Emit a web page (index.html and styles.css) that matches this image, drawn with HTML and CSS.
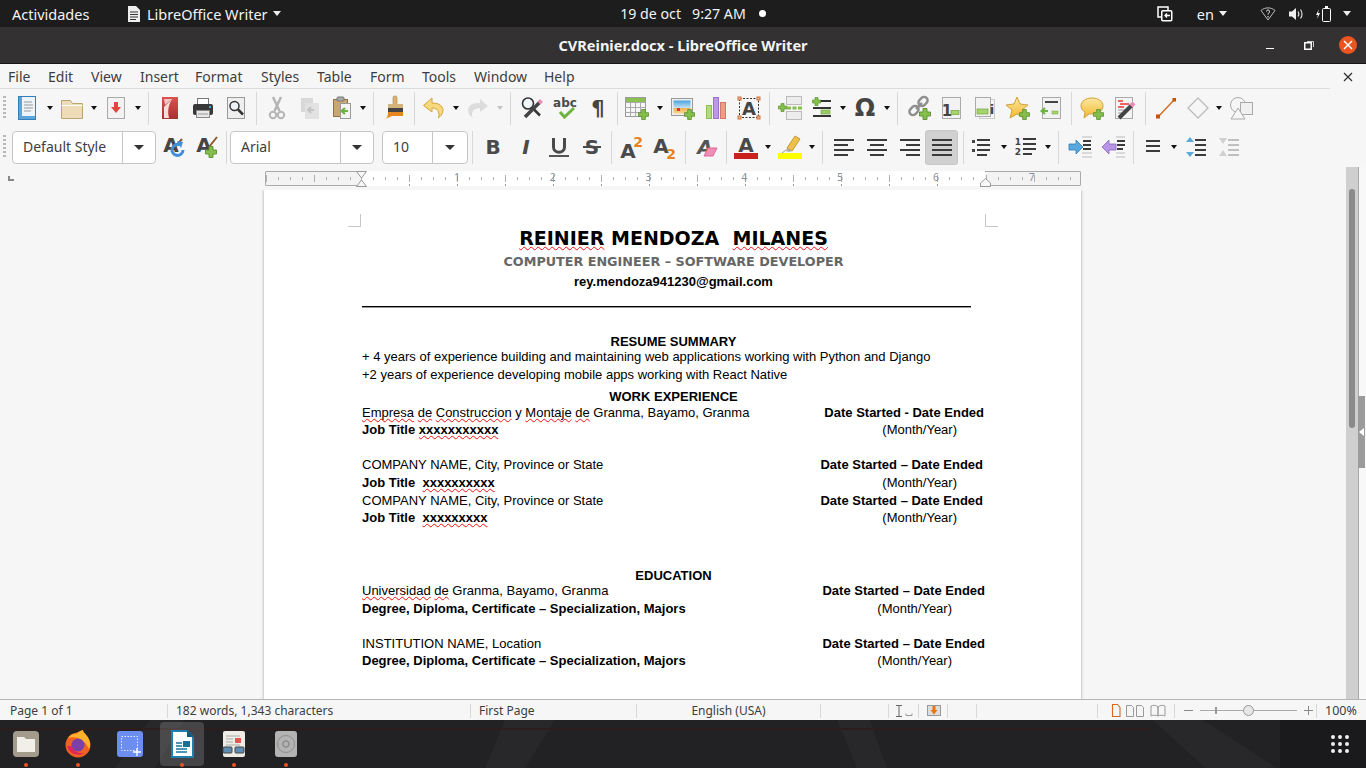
FILE: index.html
```html
<!DOCTYPE html>
<html lang="es">
<head>
<meta charset="utf-8">
<title>CVReinier.docx - LibreOffice Writer</title>
<link rel="stylesheet" href="styles.css">
</head>
<body>
<svg class="defs" width="0" height="0" aria-hidden="true">
  <defs>
    <symbol id="plus" viewBox="0 0 12 12"><path d="M4 .5h4v3.500h3.500v4H8v3.500H4V8H.5V4H4z" fill="#85bf4b" stroke="#5b8f2d" stroke-width=".9"/></symbol>
    <linearGradient id="pdfg" x1="0" y1="0" x2="0" y2="1"><stop offset="0" stop-color="#d9534f"/><stop offset="1" stop-color="#a83232"/></linearGradient>
    <linearGradient id="yel" x1="0" y1="0" x2="0" y2="1"><stop offset="0" stop-color="#fbe9a0"/><stop offset="1" stop-color="#f3b72f"/></linearGradient>
    <linearGradient id="sky" x1="0" y1="0" x2="0" y2="1"><stop offset="0" stop-color="#4aa3df"/><stop offset=".55" stop-color="#bfe0f2"/><stop offset=".56" stop-color="#f0b050"/><stop offset="1" stop-color="#f6d68e"/></linearGradient>
  </defs>
</svg>

<header class="topbar">
  <div class="top-left">
    <span class="activities">Actividades</span>
    <span class="appname">
      <svg width="14" height="16" viewBox="0 0 14 16"><path d="M1 0h8l4 4v12H1z" fill="#eee"/><path d="M3 6h8M3 8.500h8M3 11h8M3 13.500h6" stroke="#333"/></svg>
      <span class="apptext">LibreOffice Writer</span>
      <i class="caret-w"></i>
    </span>
  </div>
  <div class="clock"><span>19 de oct</span><span>9:27 AM</span><i class="clockdot"></i></div>
  <div class="top-right">
    <svg class="tr-screen" width="16" height="16" viewBox="0 0 16 16"><path d="M4 11H1V1h10v3" fill="none" stroke="#fff" stroke-width="1.500"/><rect x="4.750" y="4.750" width="10" height="10" rx="1" fill="none" stroke="#fff" stroke-width="1.500"/><path d="M13 9.500H8M10 7.500 8 9.500l2 2" fill="none" stroke="#fff" stroke-width="1.300"/></svg>
    <span class="lang">en</span><i class="caret-w"></i>
    <svg class="tr-wifi" width="16" height="14" viewBox="0 0 16 14"><path d="M1 3.500C5 0 11 0 15 3.500L8 13z" fill="none" stroke="#bbb"/><path d="M6.500 4.500c0-2 3-2 3 0 0 1.500-1.500 1.500-1.500 3M8 9v1.500" fill="none" stroke="#fff"/></svg>
    <svg class="tr-vol" width="15" height="14" viewBox="0 0 15 14"><path d="M0 4.500h3L7 1v12L3 9.500H0z" fill="#eee"/><path d="M9 4.500c1 1.500 1 3.500 0 5M11.500 2.500c2 2.500 2 6.500 0 9" fill="none" stroke="#ddd" stroke-width="1.200"/></svg>
    <svg class="tr-bat" width="15" height="16" viewBox="0 0 15 16"><path d="M3 3 0 9h2l-1 4 3-6H2z" fill="#fff"/><rect x="6.500" y="2.500" width="8" height="13" rx="1" fill="none" stroke="#fff"/><rect x="9" y="0" width="3" height="2" fill="#fff"/></svg>
    <i class="caret-w caret-end"></i>
  </div>
</header>

<div class="titlebar">
  <span></span>
  <strong class="wintitle">CVReinier.docx - LibreOffice Writer</strong>
  <div class="winbtns">
    <i class="wb-min"></i>
    <svg class="wb-max" width="10" height="10" viewBox="0 0 10 10"><path d="M3 1.500h6.500V7" fill="none" stroke="#ccc"/><rect x=".750" y="2.750" width="6.500" height="6.500" fill="none" stroke="#fff" stroke-width="1.500"/></svg>
    <span class="wb-close"><svg width="10" height="10" viewBox="0 0 10 10"><path d="M1 1l8 8M9 1l-8 8" stroke="#fff" stroke-width="1.500"/></svg></span>
  </div>
</div>

<nav class="menubar">
  <div class="menus">
    <span class="m-file">File</span><span class="m-edit">Edit</span><span class="m-view">View</span><span class="m-insert">Insert</span><span class="m-format">Format</span><span class="m-styles">Styles</span><span class="m-table">Table</span><span class="m-form">Form</span><span class="m-tools">Tools</span><span class="m-window">Window</span><span class="m-help">Help</span>
  </div>
  <svg class="menuclose" width="10" height="10" viewBox="0 0 10 10"><path d="M1 1l8 8M9 1l-8 8" stroke="#333" stroke-width="1.300"/></svg>
</nav>

<div class="toolbar tb1">
  <i class="grip"></i>
  <span class="i"><svg width="24" height="24" viewBox="0 0 24 24"><rect x="2.500" y=".5" width="17" height="23" fill="#eef5fa" stroke="#2f80bb"/><rect x="3" y="1" width="3" height="22" fill="#5aa5dc"/><rect x="3" y="20" width="16" height="3" fill="#5aa5dc"/><path d="M8 6h8M8 9h9M8 12h9M8 15h7" stroke="#999"/></svg></span><span class="a"></span>
  <span class="i"><svg width="24" height="24" viewBox="0 0 24 24"><path d="M1.500 4.500h9l2 3h10v15h-21z" fill="#eedbb8" stroke="#bda274"/><path d="M1.500 9.500h21" stroke="#fff"/></svg></span><span class="a"></span>
  <span class="i"><svg width="24" height="24" viewBox="0 0 24 24"><rect x="3.500" y="1.500" width="17" height="21" fill="#f2f2f2" stroke="#aaa"/><path d="M10 6h4v5h3l-5 6-5-6h3z" fill="#e4433f"/></svg></span><span class="a"></span>
  <span class="s w"></span>
  <span class="i"><svg width="24" height="24" viewBox="0 0 24 24"><rect x="4" y="1" width="16" height="22" fill="url(#pdfg)"/><path d="M15 2c-4 5-6 12-4 20H6V11z" fill="#f6dcdc"/><path d="M6 3h8L7 9z" fill="#f3c4c4"/></svg></span>
  <span class="i"><svg width="24" height="24" viewBox="0 0 24 24"><rect x="6.500" y="2.500" width="11" height="8" fill="#fff" stroke="#777"/><rect x="2" y="8" width="20" height="11" rx="2" fill="#383838"/><rect x="18" y="10" width="2" height="2" fill="#2bb3e6"/><rect x="5.500" y="14.500" width="13" height="7" fill="#e8e8e8" stroke="#888"/><path d="M7 18h10" stroke="#999"/></svg></span>
  <span class="i"><svg width="24" height="24" viewBox="0 0 24 24"><rect x="3.500" y="1.500" width="17" height="21" fill="#efefef" stroke="#999"/><circle cx="10.500" cy="10" r="4.500" fill="#eef2f6" stroke="#333" stroke-width="1.500"/><path d="M14 13.500l5 5" stroke="#333" stroke-width="2.500"/></svg></span>
  <span class="s"></span>
  <span class="i"><svg width="24" height="24" viewBox="0 0 24 24"><g fill="none" stroke="#b5b5b5"><path d="M9.500 15 16 1M14.500 15 8 1" stroke-width="2.500"/><circle cx="8" cy="19" r="3.200" stroke-width="2"/><circle cx="16" cy="19" r="3.200" stroke-width="2"/></g></svg></span>
  <span class="i"><svg width="24" height="24" viewBox="0 0 24 24"><rect x="3" y="2" width="12" height="14" fill="#d8d8d8"/><rect x="7" y="7" width="14" height="16" fill="#e2e2e2"/><path d="M16 14h-5M13 11l-3 3 3 3" fill="none" stroke="#c4c4c4" stroke-width="2"/></svg></span>
  <span class="i n"><svg width="24" height="24" viewBox="0 0 24 24"><rect x="3.500" y="3.500" width="14" height="17" fill="#c9a772" stroke="#8d7346"/><rect x="7" y="1" width="7" height="4" rx="1" fill="#aaa" stroke="#777"/><rect x="10.500" y="7.500" width="10" height="15" fill="#f4f4f4" stroke="#999"/><path d="M18 15h-5M15 12l-3.500 3 3.500 3" fill="none" stroke="#6db33f" stroke-width="2.200"/></svg></span><span class="a"></span>
  <span class="s w"></span>
  <span class="i"><svg width="24" height="24" viewBox="0 0 24 24"><rect x="10" y="0" width="4" height="9" rx="1.500" fill="#d9b370" stroke="#a98748" stroke-width=".6"/><rect x="5" y="8" width="15" height="4" fill="#d4b47a"/><rect x="5" y="12" width="15" height="4" fill="#444"/><path d="M5 16h15v4H9l-7 3c2-1 3-3 3-7z" fill="#e8861d"/></svg></span>
  <span class="s n"></span>
  <span class="i"><svg width="24" height="24" viewBox="0 0 24 24"><path d="M10 2 1.500 9.500 10 16v-4c4 0 7 2 7 7 0 1 0 2-1 3 5-3 6-8 4-11-2-3-5-4-10-4z" fill="#f7d87c" stroke="#d3a53b"/></svg></span><span class="a"></span>
  <span class="i"><svg width="24" height="24" viewBox="0 0 24 24"><path d="M14 3l8 7-8 6v-4c-4 0-8 2-8 7 0 1 0 2 1 3-5-3-6-8-4-11 2-3 5-4 11-4z" fill="#dcdcdc"/></svg></span><span class="a off"></span>
  <span class="s w"></span>
  <span class="i"><svg width="24" height="24" viewBox="0 0 24 24"><circle cx="8" cy="7.500" r="5.500" fill="#f4f7f9" stroke="#333" stroke-width="1.600"/><path d="M12 11.500l8 8" stroke="#333" stroke-width="2.500"/><path d="M5 21 20 6" stroke="#444" stroke-width="3.500"/><path d="M19 7l2.500-2.500" stroke="#ea8cb6" stroke-width="4"/></svg></span>
  <span class="i"><svg width="24" height="24" viewBox="0 0 24 24"><text x="12" y="11" class="svgt" font-size="12" text-anchor="middle" fill="#4a4a4a">abc</text><path d="M7 16l4.500 5 9.500-9" fill="none" stroke="#6db33f" stroke-width="3"/></svg></span>
  <span class="i"><svg width="24" height="24" viewBox="0 0 24 24"><text x="12" y="20" class="svgt" font-size="21" text-anchor="middle" fill="#444">¶</text></svg></span>
  <span class="s n"></span>
  <span class="i"><svg width="24" height="24" viewBox="0 0 24 24"><rect x=".5" y="1.500" width="20" height="19" fill="#f6f6f6" stroke="#999"/><path d="M.5 6.500h20M.5 11.500h20M.5 16.500h20M5.500 1.500v19M10.500 1.500v19M15.500 1.500v19" stroke="#aaa"/><rect x="1" y="2" width="19" height="4" fill="#8cc152"/><use href="#plus" x="13" y="13" width="11" height="11"/></svg></span><span class="a w"></span>
  <span class="i"><svg width="24" height="24" viewBox="0 0 24 24"><rect x=".5" y="2.500" width="21" height="17" fill="#eee" stroke="#999"/><rect x="2.500" y="4.500" width="17" height="13" fill="url(#sky)"/><rect x="6" y="12" width="3" height="3" fill="#d33"/><use href="#plus" x="13" y="13" width="11" height="11"/></svg></span>
  <span class="i"><svg width="24" height="24" viewBox="0 0 24 24"><rect x="2.500" y="9.500" width="5" height="13" fill="#b0dd76" stroke="#8cbc55"/><rect x="9.500" y="1.500" width="5" height="21" fill="#bd98e8" stroke="#9a72c9"/><rect x="16.500" y="6.500" width="5" height="16" fill="#ee9c86" stroke="#cf7a64"/></svg></span>
  <span class="i"><svg width="24" height="24" viewBox="0 0 24 24"><rect x="2.500" y="2.500" width="19" height="19" fill="none" stroke="#333" stroke-dasharray="2 1.500"/><text x="12" y="19" class="svgt" font-size="18" text-anchor="middle" fill="#444">A</text><g fill="#f5b58c" stroke="#cf7134"><rect x="1" y="1" width="3" height="3"/><rect x="20" y="1" width="3" height="3"/><rect x="1" y="20" width="3" height="3"/><rect x="20" y="20" width="3" height="3"/></g></svg></span>
  <span class="s"></span>
  <span class="i"><svg width="24" height="24" viewBox="0 0 24 24"><rect x="8.500" y=".5" width="15" height="8" fill="#ededed" stroke="#bbb"/><rect x="8.500" y="15.500" width="15" height="8" fill="#ededed" stroke="#bbb"/><path d="M9 12h15" stroke="#85bf4b" stroke-width="3" stroke-dasharray="4 1.500"/><use href="#plus" x="0" y="7" width="9" height="9"/></svg></span>
  <span class="i n"><svg width="24" height="24" viewBox="0 0 24 24"><path d="M3 12h18M3 20h18M10 5h11" stroke="#333" stroke-width="2"/><use href="#plus" x="2" y="1" width="9" height="9"/><rect x="11" y="14" width="9" height="4" fill="#9ccc65" stroke="#6e9c3b" stroke-width=".6"/></svg></span><span class="a"></span>
  <span class="i"><svg width="24" height="24" viewBox="0 0 24 24"><text x="12" y="20" class="svgt" font-size="24" text-anchor="middle" fill="#444">Ω</text></svg></span><span class="a"></span>
  <span class="s w"></span>
  <span class="i"><svg width="24" height="24" viewBox="0 0 24 24"><g fill="none" stroke="#8f8f8f" stroke-width="2.500"><rect x="11" y="2" width="10" height="7" rx="3.500" transform="rotate(-45 16 5.500)"/><rect x="2" y="11" width="10" height="7" rx="3.500" transform="rotate(-45 7 14.500)"/><path d="M9 13l6-6"/></g><use href="#plus" x="12" y="12" width="12" height="12"/></svg></span>
  <span class="i"><svg width="24" height="24" viewBox="0 0 24 24"><rect x="2.500" y="1.500" width="18" height="21" fill="#f2f2f2" stroke="#aaa"/><text x="7" y="20" class="svgt" font-size="15" text-anchor="middle" fill="#444">1</text><rect x="11" y="14.500" width="8" height="4" fill="#a5d46a" stroke="#74a33c" stroke-width=".7"/></svg></span>
  <span class="i"><svg width="24" height="24" viewBox="0 0 24 24"><rect x="6.500" y="3.500" width="15" height="19" fill="#f6f6f6" stroke="#ccc"/><rect x="2.500" y="1.500" width="15" height="19" fill="#f2f2f2" stroke="#aaa"/><rect x="4" y="13" width="11" height="5" fill="#a5d46a" stroke="#74a33c" stroke-width=".7"/><text x="19" y="18" class="svgt" font-size="13" text-anchor="middle" fill="#444">i</text></svg></span>
  <span class="i"><svg width="24" height="24" viewBox="0 0 24 24"><path d="M11 1l3 7 8 1-6 5 2 8-7-4-7 4 2-8-6-5 8-1z" fill="url(#yel)" stroke="#d1a23a"/><use href="#plus" x="13" y="13" width="11" height="11"/></svg></span>
  <span class="i"><svg width="24" height="24" viewBox="0 0 24 24"><rect x="3.500" y="1.500" width="18" height="21" fill="#f2f2f2" stroke="#aaa"/><path d="M6 6h13" stroke="#444" stroke-width="2"/><path d="M9 15H3M6 12l-3.500 3L6 18" fill="none" stroke="#6db33f" stroke-width="2"/><rect x="13" y="15" width="6" height="3" fill="#a5d46a" stroke="#74a33c" stroke-width=".5"/></svg></span>
  <span class="s"></span>
  <span class="i"><svg width="24" height="24" viewBox="0 0 24 24"><path d="M12 2c6 0 11 3 11 8s-5 8-10 8c-2 0-3 0-4 0l-5 4 1-6c-2-1-4-3-4-6 0-5 5-8 11-8z" fill="url(#yel)" stroke="#d1a23a"/><use href="#plus" x="13" y="13" width="11" height="11"/></svg></span>
  <span class="i"><svg width="24" height="24" viewBox="0 0 24 24"><rect x="2.500" y="1.500" width="17" height="21" fill="#f4f4f4" stroke="#aaa"/><path d="M5 5h5M7 8h9M5 11h6" stroke="#e33" stroke-width="1.500"/><path d="M5 14h8M5 17h6" stroke="#999"/><path d="M6 22 19 9" stroke="#444" stroke-width="4"/><path d="M18 10l3-3" stroke="#ea8cb6" stroke-width="4"/></svg></span>
  <span class="s"></span>
  <span class="i"><svg width="24" height="24" viewBox="0 0 24 24"><path d="M4 21 20 4" stroke="#d2691e" stroke-width="1.300"/><rect x="2" y="18.500" width="4" height="4" fill="#c45508"/><rect x="18.500" y="2" width="3.500" height="3.500" fill="#c45508"/></svg></span>
  <span class="i n"><svg width="24" height="24" viewBox="0 0 24 24"><path d="M12 2l10 10-10 10L2 12z" fill="#f6f6f6" stroke="#bbb" stroke-width="1.300" stroke-linejoin="round"/></svg></span><span class="a"></span>
  <span class="i"><svg width="24" height="24" viewBox="0 0 24 24"><circle cx="9" cy="9" r="7.500" fill="#f6f6f6" stroke="#aaa"/><rect x="11.500" y="6.500" width="12" height="12" fill="#f0f0f0" stroke="#aaa"/><path d="M9 12l7 11H2z" fill="#f6f6f6" stroke="#aaa"/></svg></span>
</div>

<div class="toolbar tb2">
  <i class="grip g2"></i>
  <div class="combo c-style"><span class="combo-text">Default Style</span><span class="combo-btn"></span></div>
  <span class="i lead"><svg width="24" height="24" viewBox="0 0 24 24"><text x="9" y="17" class="svgt" font-size="20" text-anchor="middle" fill="#444">A</text><path d="M20 4 13 12" stroke="#8a5a2b" stroke-width="2"/><path d="M21 15a5.500 5.500 0 1 1-3-5" fill="none" stroke="#3f8fdc" stroke-width="3"/><path d="M15 6l6 1-2 6z" fill="#3f8fdc"/></svg></span>
  <span class="i"><svg width="24" height="24" viewBox="0 0 24 24"><text x="9" y="17" class="svgt" font-size="20" text-anchor="middle" fill="#444">A</text><path d="M22 2 14 12" stroke="#8a5a2b" stroke-width="2"/><use href="#plus" x="10" y="11" width="12" height="12"/></svg></span>
  <span class="s n"></span>
  <div class="combo c-font"><span class="combo-text">Arial</span><span class="combo-btn"></span></div>
  <div class="combo c-size"><span class="combo-text">10</span><span class="combo-btn"></span></div>
  <span class="s"></span>
  <span class="i"><svg width="24" height="24" viewBox="0 0 24 24"><text x="12" y="19" class="svgt" font-size="20" text-anchor="middle" fill="#4a4a4a">B</text></svg></span>
  <span class="i"><svg width="24" height="24" viewBox="0 0 24 24"><text x="12" y="19" class="svgt it" font-size="20" text-anchor="middle" fill="#4a4a4a">I</text></svg></span>
  <span class="i"><svg width="24" height="24" viewBox="0 0 24 24"><path d="M6.500 3v9c0 7 11 7 11 0V3" fill="none" stroke="#4a4a4a" stroke-width="3"/><rect x="2" y="20" width="20" height="2" fill="#555"/></svg></span>
  <span class="i"><svg width="24" height="24" viewBox="0 0 24 24"><text x="12" y="19" class="svgt" font-size="20" text-anchor="middle" fill="#4a4a4a">S</text><rect x="3" y="11" width="18" height="2" fill="#4a4a4a"/></svg></span>
  <span class="s n"></span>
  <span class="i"><svg width="24" height="24" viewBox="0 0 24 24"><text x="9" y="23" class="svgt" font-size="20" text-anchor="middle" fill="#4a4a4a">A</text><text x="19" y="12" class="svgt" font-size="14" text-anchor="middle" fill="#e8821e">2</text></svg></span>
  <span class="i"><svg width="24" height="24" viewBox="0 0 24 24"><text x="9" y="18" class="svgt" font-size="20" text-anchor="middle" fill="#4a4a4a">A</text><text x="19" y="24" class="svgt" font-size="14" text-anchor="middle" fill="#e8821e">2</text></svg></span>
  <span class="s w"></span>
  <span class="i"><svg width="24" height="24" viewBox="0 0 24 24"><text x="10" y="19" class="svgt it" font-size="20" text-anchor="middle" fill="#555">A</text><path d="M13 13h9l-4 8H9z" fill="#f08fb5" stroke="#d9679a"/></svg></span>
  <span class="s n"></span>
  <span class="i"><svg width="24" height="24" viewBox="0 0 24 24"><text x="12" y="17" class="svgt" font-size="20" text-anchor="middle" fill="#4a4a4a">A</text><rect y="18" width="24" height="6" fill="#c9211e"/></svg></span><span class="a"></span>
  <span class="i"><svg width="24" height="24" viewBox="0 0 24 24"><path d="M9 13 17 1l5 3-8 12z" fill="#edc14b" stroke="#c79a2e"/><path d="M9 13l5 3-3 1-3-1z" fill="#aaa"/><path d="M4 18l4-3" stroke="#999"/><rect y="18" width="24" height="6" fill="#ff0"/></svg></span><span class="a"></span>
  <span class="s w"></span>
  <span class="i"><svg width="24" height="24" viewBox="0 0 24 24"><path d="M2 5h20M2 10h14M2 15h20M2 20h14" stroke="#3a3a3a" stroke-width="2"/></svg></span>
  <span class="i"><svg width="24" height="24" viewBox="0 0 24 24"><path d="M2 5h20M5 10h14M2 15h20M5 20h14" stroke="#3a3a3a" stroke-width="2"/></svg></span>
  <span class="i"><svg width="24" height="24" viewBox="0 0 24 24"><path d="M2 5h20M8 10h14M2 15h20M8 20h14" stroke="#3a3a3a" stroke-width="2"/></svg></span>
  <span class="i on"><svg width="24" height="24" viewBox="0 0 24 24"><path d="M2 5h20M2 10h20M2 15h20M2 20h20" stroke="#3a3a3a" stroke-width="2"/></svg></span>
  <span class="s"></span>
  <span class="i n"><svg width="24" height="24" viewBox="0 0 24 24"><rect x="1" y="5" width="3" height="3" fill="#444"/><rect x="1" y="14" width="3" height="3" fill="#444"/><path d="M6 5h13M6 10h13M6 15h13M6 20h10" stroke="#3a3a3a" stroke-width="2"/></svg></span><span class="a"></span>
  <span class="i"><svg width="24" height="24" viewBox="0 0 24 24"><text x="4" y="10" class="svgt" font-size="9" text-anchor="middle" fill="#444">1</text><text x="4" y="20" class="svgt" font-size="9" text-anchor="middle" fill="#444">2</text><path d="M9 4h13M9 9h13M9 14h13M9 19h9" stroke="#3a3a3a" stroke-width="2"/></svg></span><span class="a"></span>
  <span class="s w"></span>
  <span class="i"><svg width="24" height="24" viewBox="0 0 24 24"><path d="M1 9h7V5l7 7-7 7v-4H1z" fill="#5aa9de" stroke="#2f7fb8" stroke-width=".8"/><path d="M15 6h8M15 10h8M15 14h8" stroke="#3a3a3a" stroke-width="2"/><path d="M14 2h10M14 18h10M14 22h10" stroke="#bbb"/></svg></span>
  <span class="i"><svg width="24" height="24" viewBox="0 0 24 24"><path d="M15 9H8V5l-7 7 7 7v-4h7z" fill="#b794e6" stroke="#8c68bd" stroke-width=".8"/><path d="M16 6h8M16 10h8M16 14h6" stroke="#3a3a3a" stroke-width="2"/><path d="M15 2h9M15 18h9M15 22h9" stroke="#bbb"/></svg></span>
  <span class="s"></span>
  <span class="i n"><svg width="24" height="24" viewBox="0 0 24 24"><path d="M5 6h14M5 11h14M5 16h14" stroke="#3a3a3a" stroke-width="2"/></svg></span><span class="a"></span>
  <span class="i"><svg width="24" height="24" viewBox="0 0 24 24"><path d="M6 2l4 5H2zM6 22l4-5H2z" fill="#5aa9de"/><path d="M11 5h11M11 10h11M11 15h11M11 20h11" stroke="#3a3a3a" stroke-width="2"/></svg></span>
  <span class="i"><svg width="24" height="24" viewBox="0 0 24 24"><path d="M2 3l4 6 4-6zM2 21l4-6 4 6z" fill="#d0d0d0"/><path d="M11 5h11M11 10h11M11 15h11M11 20h11" stroke="#c0c0c0" stroke-width="2"/></svg></span>
</div>

<div class="workspace">
  <div class="workcol">
    <div class="rulerrow">
      <i class="cornermark"></i>
      <div class="ruler">
        <div class="ruler-white"></div>
        <div class="ruler-nums"><span>1</span><span>2</span><span>3</span><span>4</span><span>5</span><span>6</span><span>7</span></div>
        <svg class="mk-left" width="11" height="16" viewBox="0 0 11 16"><path d="M.5.500h10L5.500 7zM.5 15.500h10L5.500 9z" fill="#f8f8f8" stroke="#999"/></svg>
        <svg class="mk-right" width="11" height="9" viewBox="0 0 11 9"><path d="M.5 8.500h10V5L5.500.5.500 5z" fill="#f8f8f8" stroke="#999"/></svg>
      </div>
    </div>
    <main class="canvas">
      <article class="page">
        <i class="crop crop-l"></i><i class="crop crop-r"></i>
        <div class="ln h23 ctr title"><span class="sp">REINIER</span> MENDOZA &nbsp;<span class="sp">MILANES</span></div>
        <div class="ln h20 ctr subtitle">COMPUTER ENGINEER – SOFTWARE DEVELOPER</div>
        <div class="ln h24 ctr b">rey.mendoza941230@gmail.com</div>
        <div class="ln h36 rulerow"><div class="rule"></div></div>
        <div class="ln h15 ctr b">RESUME SUMMARY</div>
        <div class="ln h18">+ 4 years of experience building and maintaining web applications working with Python and Django</div>
        <div class="ln h22">+2 years of experience developing mobile apps working with React Native</div>
        <div class="ln h16 ctr b">WORK EXPERIENCE</div>
        <div class="ln h17 row"><span><span class="sp">Empresa</span> <span class="sp">de</span> <span class="sp">Construccion</span> y <span class="sp">Montaje</span> <span class="sp">de</span> Granma, Bayamo, Granma</span><span class="b r984">Date Started - Date Ended</span></div>
        <div class="ln h35 row"><span class="b">Job Title <span class="sp">xxxxxxxxxxx</span></span><span class="r957">(Month/Year)</span></div>
        <div class="ln h18 row"><span>COMPANY NAME, City, Province or State</span><span class="b r983">Date Started – Date Ended</span></div>
        <div class="ln h18 row"><span class="b">Job Title &nbsp;<span class="sp">xxxxxxxxxx</span></span><span class="r957">(Month/Year)</span></div>
        <div class="ln h17 row"><span>COMPANY NAME, City, Province or State</span><span class="b r983">Date Started – Date Ended</span></div>
        <div class="ln h58 row"><span class="b">Job Title &nbsp;<span class="sp">xxxxxxxxx</span></span><span class="r957">(Month/Year)</span></div>
        <div class="ln h15 ctr b">EDUCATION</div>
        <div class="ln h18 row"><span><span class="sp">Universidad</span> <span class="sp">de</span> Granma, Bayamo, Granma</span><span class="b r985">Date Started – Date Ended</span></div>
        <div class="ln h35 row"><span class="b">Degree, Diploma, Certificate – Specialization, Majors</span><span class="r952">(Month/Year)</span></div>
        <div class="ln h17 row"><span>INSTITUTION NAME, Location</span><span class="b r985">Date Started – Date Ended</span></div>
        <div class="ln h35 row"><span class="b">Degree, Diploma, Certificate – Specialization, Majors</span><span class="r952">(Month/Year)</span></div>
      </article>
    </main>
  </div>
  <div class="scrolltrack"><i class="scrollthumb"></i></div>
  <div class="sidestrip"><span class="sidehandle"><i></i></span></div>
</div>

<footer class="statusbar">
  <span class="st st1">Page 1 of 1</span>
  <span class="st st2">182 words, 1,343 characters</span>
  <span class="st st3">First Page</span>
  <span class="st st4">English (USA)</span>
  <span class="st st5"></span>
  <span class="st st6"><svg width="18" height="12" viewBox="0 0 18 12"><path d="M1 .5h6M1 11.500h6M4 .5v11" stroke="#666"/><path d="M11 9.500v2h6v-2" fill="none" stroke="#999" transform="translate(0 -1)"/></svg></span>
  <span class="st st7"><svg width="14" height="11" viewBox="0 0 14 11"><rect x=".5" y=".5" width="13" height="10" fill="#ddd" stroke="#999"/><path d="M5.500 1h3v4h2L7 9.500 3.500 5h2z" fill="#e8750f"/></svg></span>
  <span class="st st8"></span>
  <span class="st st9"></span>
  <span class="st st10"><svg width="56" height="13" viewBox="0 0 56 13"><path d="M1.500.5h5l2.500 3v9H1.500z" fill="none" stroke="#d2691e" stroke-width="1.100"/><g fill="none" stroke="#999"><path d="M15.500 1.500h5l2 2v9h-7zM25.500 1.500h5l2 2v9h-7z"/><path d="M47 3c-2-2-5-2-7-1v10c2-1 5-1 7 0zM47 3c2-2 5-2 7-1v10c-2-1-5-1-7 0z"/></g></svg></span>
  <span class="st st11">
    <i class="zm-minus"></i>
    <span class="zm-track"><i class="zm-notch"></i><i class="zm-knob"></i></span>
    <i class="zm-plus"></i>
  </span>
  <span class="st st12">100%</span>
</footer>

<div class="dock">
  <svg class="wood" width="1366" height="48" viewBox="0 0 1366 48" aria-hidden="true">
    <path d="M0 0h1366v48H0z" fill="#222124"/>
    <path d="M1280 0h86v48h-86z" fill="#1a1a1d"/>
    <path d="M150 0h35l-30 48h-40zM505 0h50l-30 48h-40zM837 0h33l17 48h-30zM1153 0h50l74 48h-72z" fill="#28272a"/>
    <path d="M0 9h1150" stroke="#2b1e1d" stroke-width="2"/>
  </svg>
  <span class="dk"><svg width="26" height="26" viewBox="0 0 26 26"><rect width="26" height="26" rx="4" fill="#a39c8d"/><path d="M4 6h7l2 2h9v13H4z" fill="#f2efe8"/></svg><i class="dot"></i></span>
  <span class="dk"><svg width="28" height="28" viewBox="0 0 28 28"><circle cx="14" cy="15" r="12.500" fill="#f0621f"/><path d="M4 8c2-3 6-5 8-4 3-3 6-4 7-4 0 2 2 3 4 6 3 4 4 9 2 13C20 8 10 6 4 8z" fill="#fcb22b"/><circle cx="14" cy="15" r="6.500" fill="#7b3fa8"/><path d="M3 16c2 8 11 11 18 7-7 1-12-2-13-7z" fill="#e0275b"/></svg><i class="dot"></i></span>
  <span class="dk"><svg width="26" height="26" viewBox="0 0 26 26"><rect width="26" height="26" rx="3" fill="#6c8ef0"/><rect x="4.500" y="5.500" width="16" height="14" fill="none" stroke="#e8ecff" stroke-dasharray="1.500 1.500"/><path d="M16 21h8M20 17v8" stroke="#fff" stroke-width="1.300"/></svg></span>
  <span class="dk active"><svg width="26" height="28" viewBox="0 0 26 28"><path d="M3 1h15l6 6v20H3z" fill="#fff" stroke="#1f7fae" stroke-width="2"/><path d="M18 0l7 7h-7z" fill="#165a7c"/><path d="M7 13h6M7 16h6M7 19h11M7 22h11" stroke="#17729f" stroke-width="1.400"/><rect x="14" y="11" width="7" height="6" fill="#1a6f97"/></svg><i class="dot"></i></span>
  <span class="dk"><svg width="24" height="26" viewBox="0 0 24 26"><rect width="22" height="26" x="1" rx="2" fill="#efece6"/><path d="M4 5h14M4 8h7M4 11h7M4 14h14" stroke="#aaa"/><rect x="13" y="7" width="6" height="5" fill="#e0584f"/><rect x="1" y="16" width="9" height="6" rx="1" fill="#5d8db5" stroke="#444"/><rect x="13" y="16" width="9" height="6" rx="1" fill="#5d8db5" stroke="#444"/></svg><i class="dot"></i></span>
  <span class="dk"><svg width="22" height="26" viewBox="0 0 22 26"><rect width="22" height="26" rx="3" fill="#b3b3b3"/><circle cx="11" cy="13" r="8.500" fill="none" stroke="#8e8e8e"/><circle cx="11" cy="13" r="3" fill="none" stroke="#8e8e8e" stroke-width="1.400"/></svg><i class="dot"></i></span>
  <span class="dockspace"></span>
  <span class="gridbtn"><i></i><i></i><i></i><i></i><i></i><i></i><i></i><i></i><i></i></span>
</div>
</body>
</html>
```

FILE: styles.css
```css
* { box-sizing: border-box; }
html, body { margin: 0; padding: 0; }
body {
  width: 1366px;
  height: 768px;
  overflow: hidden;
  display: flex;
  flex-direction: column;
  background: #f6f6f6;
  font-family: "Noto Sans", sans-serif;
  color: #3d3d3d;
}
i { display: block; font-style: normal; }
.defs { position: absolute; }
svg { display: block; flex: none; overflow: visible; }
.svgt { font-family: "DejaVu Sans", sans-serif; font-weight: 700; }
.it { font-style: italic; }

/* top bar */
.topbar {
  height: 27px;
  flex: none;
  display: grid;
  grid-template-columns: 1fr auto 1fr;
  align-items: center;
  background: #1d1d1d;
  color: #f2f2f2;
  font-size: 14.5px;
}
.top-left { display: flex; align-items: center; padding-left: 12px; }
.activities { width: 115px; }
.appname { display: flex; align-items: center; }
.apptext { margin-left: 6px; }
.caret-w { width: 0; height: 0; border: 4.5px solid transparent; border-top: 5px solid #eee; border-bottom: 0; margin-left: 5px; }
.clock { display: flex; align-items: center; gap: 11px; position: relative; font-size: 14.2px; }
.clockdot { position: absolute; left: calc(100% + 13px); top: 6px; width: 7px; height: 7px; border-radius: 50%; background: #fff; }
.top-right { display: flex; align-items: center; justify-content: flex-end; padding-right: 15px; }
.lang { margin-left: 24px; }
.tr-wifi { margin-left: 33px; }
.tr-vol { margin-left: 13px; }
.tr-bat { margin-left: 12px; }
.caret-end { margin-left: 12px; }

/* title bar */
.titlebar {
  height: 37px;
  flex: none;
  display: grid;
  grid-template-columns: 1fr auto 1fr;
  align-items: center;
  background: #333132;
  border-bottom: 1px solid #161616;
  color: #f4f4f4;
}
.wintitle { font-size: 14.6px; font-weight: 700; }
.winbtns { display: flex; align-items: center; justify-content: flex-end; padding-right: 9px; }
.wb-min { width: 8px; height: 1px; background: #fff; margin-top: 6px; }
.wb-max { margin-left: 30px; }
.wb-close { width: 18px; height: 18px; margin-left: 25px; border-radius: 50%; background: #e95420; display: flex; align-items: center; justify-content: center; }

/* menu */
.menubar {
  height: 25px;
  flex: none;
  display: flex;
  align-items: center;
  justify-content: space-between;
  padding: 0 13px 0 0;
  position: relative;
  background: #f6f6f6;
  font-size: 14px;
  color: #3d3d3d;
}
.menubar::after { content: ""; position: absolute; left: 0; bottom: 0; width: 1330px; height: 1px; background: #dcdcdc; }
.menus { display: flex; padding-left: 8px; }
.m-file { width: 40px; }
.m-edit { width: 43px; }
.m-view { width: 49px; }
.m-insert { width: 55px; }
.m-format { width: 66px; }
.m-styles { width: 56px; }
.m-table { width: 53px; }
.m-form { width: 52px; }
.m-tools { width: 52px; }
.m-window { width: 70px; }

/* toolbars */
.toolbar { display: flex; align-items: center; flex: none; padding-left: 3px; background: #f6f6f6; }
.tb1 { height: 38px; }
.tb2 { height: 40px; }
.grip { width: 3px; height: 24px; margin-right: 5px; background: repeating-linear-gradient(#b8b8b8 0 2px, transparent 2px 4px); }
.g2 { margin-right: 6px; }
.i { width: 33px; height: 33px; flex: none; display: flex; align-items: center; justify-content: center; }
.i.n { width: 31px; }
.i.lead { margin-left: 1px; }
.i.on { height: 35px; background: #d0d0d0; border-radius: 3px; border: 1px solid #c6c6c6; margin-left: -1px; margin-right: 1px; }
.a { width: 11px; height: 33px; flex: none; display: flex; align-items: center; justify-content: center; }
.a.w { width: 13px; }
.a::before { content: ""; width: 0; height: 0; border: 3.5px solid transparent; border-top: 4px solid #111; border-bottom: 0; }
.a.off::before { border-top-color: #c4c4c4; }
.s { width: 8px; height: 33px; flex: none; display: flex; justify-content: center; }
.s.w { width: 10px; }
.s.n { width: 6px; }
.s::before { content: ""; width: 1px; height: 100%; background: #d8d8d8; }
.combo { height: 33px; flex: none; display: flex; background: #fff; border: 1px solid #c6c6c6; border-radius: 4px; font-size: 14px; color: #3d3d3d; }
.combo-text { flex: 1; padding-left: 10px; line-height: 29px; }
.combo-btn { width: 33px; border-left: 1px solid #c6c6c6; display: flex; align-items: center; justify-content: center; }
.combo-btn::before { content: ""; width: 0; height: 0; border: 5px solid transparent; border-top: 5px solid #333; border-bottom: 0; }
.c-style { width: 144px; }
.c-font { width: 144px; margin-left: 1px; }
.c-size { width: 86px; margin-left: 8px; }
.c-size .combo-btn { width: 35px; }

/* workspace */
.workspace { height: 532px; flex: none; display: flex; background: #f6f6f6; }
.workcol { width: 1346px; flex: none; display: flex; flex-direction: column; }
.rulerrow { height: 23px; flex: none; display: flex; align-items: flex-start; padding: 4px 0 0 265px; position: relative; }
.cornermark { position: absolute; left: 8px; top: 9px; width: 6px; height: 5px; border-left: 2px solid #888; border-bottom: 2px solid #888; }
.ruler {
  width: 816px;
  height: 15px;
  position: relative;
  border: 1px solid #aaa;
  border-radius: 1px;
  background-color: #f3f3f3;
  background-image:
    linear-gradient(90deg, #b0b0b0 1px, transparent 1px),
    linear-gradient(90deg, #b0b0b0 1px, transparent 1px);
  background-size: 12px 3px, 48px 7px;
  background-position: 0 5px, 0 3px;
  background-repeat: repeat-x;
}
.ruler-white {
  position: absolute;
  left: 95px;
  top: -1px;
  width: 624px;
  height: 15px;
  background-color: #fff;
  background-image:
    linear-gradient(90deg, #b0b0b0 1px, transparent 1px),
    linear-gradient(90deg, #b0b0b0 1px, transparent 1px),
    linear-gradient(90deg, #999 1px, transparent 1px);
  background-size: 12px 3px, 48px 7px, 48px 3px;
  background-position: 0 6px, 0 4px, 0 13px;
  background-repeat: repeat-x;
}
.ruler-nums { position: absolute; left: 143px; top: -2px; display: flex; font-size: 10.5px; line-height: 15px; color: #8a9099; }
.ruler-nums span { width: 95.8px; text-align: center; background: transparent; }
.mk-left { position: absolute; left: 90px; top: -1px; }
.mk-right { position: absolute; left: 714px; top: 6px; }

.canvas { flex: 1; min-height: 0; overflow: hidden; padding-left: 264px; background: #f6f6f6; }
.page {
  width: 817px;
  height: 700px;
  position: relative;
  padding: 41px 0 0 98px;
  background: #fff;
  box-shadow: 0 0 3px rgba(0,0,0,.35);
  font-family: "Liberation Sans", Arial, sans-serif;
  font-size: 13px;
  color: #000;
}
.crop { position: absolute; top: 24px; width: 13px; height: 13px; border-bottom: 1px solid #c8c8c8; }
.crop-l { left: 84px; border-right: 1px solid #c8c8c8; }
.crop-r { left: 721px; border-left: 1px solid #c8c8c8; }
.ln { width: 630px; line-height: 16px; white-space: nowrap; }
.h15 { height: 15px; } .h16 { height: 16px; } .h17 { height: 17px; } .h18 { height: 18px; }
.h20 { height: 20px; } .h22 { height: 22px; } .h23 { height: 23px; } .h24 { height: 24px; }
.h35 { height: 35px; } .h36 { height: 36px; } .h58 { height: 58px; }
.ctr { width: 623px; text-align: center; }
.b { font-weight: 700; }
.title { font-family: "DejaVu Sans", sans-serif; font-weight: 700; font-size: 19px; line-height: 14px; }
.subtitle { font-family: "DejaVu Sans", sans-serif; font-weight: 700; font-size: 12.75px; color: #666; }
.rulerow { padding-top: 8px; }
.rule { width: 609px; height: 1px; background: #000; box-shadow: 0 1px 0 #999; }
.row { display: flex; justify-content: space-between; }
.r984 { margin-right: 8px; }
.r983 { margin-right: 9px; }
.r985 { margin-right: 7px; }
.r957 { margin-right: 35px; }
.r952 { margin-right: 40px; }
.sp { text-decoration: underline wavy #f01010 1.3px; text-underline-offset: 1px; text-decoration-skip-ink: none; }

.scrolltrack { width: 12px; flex: none; position: relative; background: #cfcfcf; }
.scrollthumb { position: absolute; left: 3px; top: 22px; width: 6px; height: 239px; border-radius: 3px; background: #8b8b8b; }
.sidestrip { width: 8px; flex: none; position: relative; background: #f8f8f8; border-left: 1px solid #aaa; }
.sidehandle { position: absolute; left: -1px; top: 229px; width: 7px; height: 72px; background: #9b9b9b; display: flex; align-items: center; justify-content: flex-start; }
.sidehandle i { width: 0; height: 0; border: 4px solid transparent; border-right: 5px solid #fff; border-left: 0; margin-top: -1px; margin-left: 1px; }

/* status bar */
.statusbar { height: 21px; flex: none; display: flex; align-items: center; padding-top: 1px; background: #f6f6f6; border-top: 1px solid #b5b5b5; font-size: 12px; color: #3d3d3d; }
.st { height: 14px; line-height: 14px; flex: none; display: flex; align-items: center; border-right: 1px solid #d8d8d8; }
.st1 { width: 168px; padding-left: 10px; }
.st2 { width: 303px; padding-left: 8px; }
.st3 { width: 166px; padding-left: 8px; }
.st4 { width: 184px; justify-content: center; }
.st5 { width: 68px; }
.st6 { width: 30px; padding-left: 6px; }
.st7 { width: 29px; padding-left: 8px; }
.st8 { width: 29px; }
.st9 { width: 121px; }
.st10 { width: 77px; padding-left: 13px; }
.st11 { width: 142px; padding-left: 9px; gap: 7px; }
.st12 { border-right: 0; padding-left: 8px; font-size: 12.5px; }
.zm-minus { width: 9px; height: 1px; background: #888; }
.zm-plus { width: 9px; height: 9px; background: linear-gradient(#888,#888) center/9px 1px no-repeat, linear-gradient(#888,#888) center/1px 9px no-repeat; }
.zm-track { width: 97px; height: 1px; background: #aaa; position: relative; }
.zm-notch { position: absolute; left: 15px; top: -3px; width: 2px; height: 7px; background: #999; }
.zm-knob { position: absolute; left: 43px; top: -5px; width: 11px; height: 11px; border-radius: 50%; background: #e6e6e6; border: 1px solid #999; }

/* dock */
.dock { height: 48px; flex: 1; position: relative; display: flex; align-items: center; }
.wood { position: absolute; left: 0; top: 0; }
.dk { width: 52px; height: 44px; position: relative; display: flex; align-items: center; justify-content: center; flex: none; }
.dk.active::before { content: ""; position: absolute; left: 4px; top: 0; width: 44px; height: 44px; border-radius: 4px; background: rgba(255,255,255,.16); }
.dk svg { position: relative; }
.dot { position: absolute; left: 24px; bottom: -1px; width: 4px; height: 4px; border-radius: 50%; background: #e95420; }
.dockspace { flex: 1; }
.gridbtn { position: relative; display: grid; grid-template-columns: repeat(3, 4px); gap: 3px; margin-right: 17px; }
.gridbtn i { width: 4px; height: 4px; border-radius: 50%; background: #eee; }
```
